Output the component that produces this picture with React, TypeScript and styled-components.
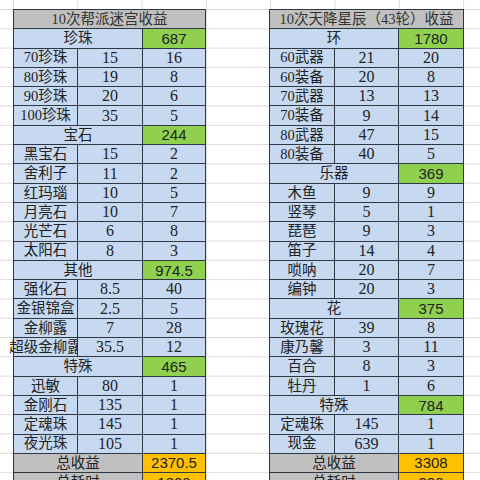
import React from 'react';
import styled, { createGlobalStyle } from 'styled-components';

type Tone = 'green' | 'orange';

type Row =
  | { kind: 'title'; text: string }
  | { kind: 'group'; label: string; value: string; tone: Tone }
  | { kind: 'item'; name: string; a: string; b: string };

const GlobalStyle = createGlobalStyle`
  html, body {
    margin: 0;
    padding: 0;
    width: 480px;
    height: 480px;
    overflow: hidden;
    background: #ffffff;
  }
`;

const Sheet = styled.div`
  width: 480px;
  height: 480px;
  box-sizing: border-box;
  padding: 9px 0 0 13px;
  display: flex;
  align-items: flex-start;
  gap: 63px;
  background-color: #ffffff;
  background-image:
    linear-gradient(to bottom, #dcdcdc 1px, transparent 1px),
    linear-gradient(to right, #dcdcdc 1px, transparent 1px);
  background-size: 100% 19.3px, 64.3px 100%;
  background-position: 0 9px, 13px 0;
  font-family: 'Liberation Serif', 'Noto Sans CJK SC', serif;
  font-size: 14.5px;
  color: #222;
`;

const Table = styled.div<{ $cols: string }>`
  display: grid;
  grid-template-columns: ${(p) => p.$cols};
  grid-auto-rows: 18.3px;
  gap: 1px;
  padding: 1px;
  background: #2e3742;
`;

const Cell = styled.div<{ $span?: number; $bg: string; $sans?: boolean; $num?: boolean }>`
  position: relative;
  grid-column: span ${(p) => p.$span ?? 1};
  background: ${(p) => p.$bg};
  display: flex;
  align-items: center;
  justify-content: center;
  white-space: nowrap;
  line-height: 1;
  font-size: ${(p) => (p.$num ? '16px' : p.$sans ? '15px' : '14.5px')};
  font-family: ${(p) =>
    p.$sans
      ? "'Liberation Sans', 'Noto Sans CJK SC', sans-serif"
      : "'Liberation Serif', 'Noto Sans CJK SC', serif"};
`;

const Title = styled(Cell)`
  color: #333;
`;

const BLUE = '#c6d9f1';
const GRAY = '#c0c0c0';
const TONES: Record<Tone, string> = { green: '#8fd14f', orange: '#ffc000' };

const left: Row[] = [
  { kind: 'title', text: '10次帮派迷宫收益' },
  { kind: 'group', label: '珍珠', value: '687', tone: 'green' },
  { kind: 'item', name: '70珍珠', a: '15', b: '16' },
  { kind: 'item', name: '80珍珠', a: '19', b: '8' },
  { kind: 'item', name: '90珍珠', a: '20', b: '6' },
  { kind: 'item', name: '100珍珠', a: '35', b: '5' },
  { kind: 'group', label: '宝石', value: '244', tone: 'green' },
  { kind: 'item', name: '黑宝石', a: '15', b: '2' },
  { kind: 'item', name: '舍利子', a: '11', b: '2' },
  { kind: 'item', name: '红玛瑙', a: '10', b: '5' },
  { kind: 'item', name: '月亮石', a: '10', b: '7' },
  { kind: 'item', name: '光芒石', a: '6', b: '8' },
  { kind: 'item', name: '太阳石', a: '8', b: '3' },
  { kind: 'group', label: '其他', value: '974.5', tone: 'green' },
  { kind: 'item', name: '强化石', a: '8.5', b: '40' },
  { kind: 'item', name: '金银锦盒', a: '2.5', b: '5' },
  { kind: 'item', name: '金柳露', a: '7', b: '28' },
  { kind: 'item', name: '超级金柳露', a: '35.5', b: '12' },
  { kind: 'group', label: '特殊', value: '465', tone: 'green' },
  { kind: 'item', name: '迅敏', a: '80', b: '1' },
  { kind: 'item', name: '金刚石', a: '135', b: '1' },
  { kind: 'item', name: '定魂珠', a: '145', b: '1' },
  { kind: 'item', name: '夜光珠', a: '105', b: '1' },
  { kind: 'group', label: '总收益', value: '2370.5', tone: 'orange' },
  { kind: 'group', label: '总耗时', value: '1800', tone: 'orange' },
];

const right: Row[] = [
  { kind: 'title', text: '10次天降星辰（43轮）收益' },
  { kind: 'group', label: '环', value: '1780', tone: 'green' },
  { kind: 'item', name: '60武器', a: '21', b: '20' },
  { kind: 'item', name: '60装备', a: '20', b: '8' },
  { kind: 'item', name: '70武器', a: '13', b: '13' },
  { kind: 'item', name: '70装备', a: '9', b: '14' },
  { kind: 'item', name: '80武器', a: '47', b: '15' },
  { kind: 'item', name: '80装备', a: '40', b: '5' },
  { kind: 'group', label: '乐器', value: '369', tone: 'green' },
  { kind: 'item', name: '木鱼', a: '9', b: '9' },
  { kind: 'item', name: '竖琴', a: '5', b: '1' },
  { kind: 'item', name: '琵琶', a: '9', b: '3' },
  { kind: 'item', name: '笛子', a: '14', b: '4' },
  { kind: 'item', name: '唢呐', a: '20', b: '7' },
  { kind: 'item', name: '编钟', a: '20', b: '3' },
  { kind: 'group', label: '花', value: '375', tone: 'green' },
  { kind: 'item', name: '玫瑰花', a: '39', b: '8' },
  { kind: 'item', name: '康乃馨', a: '3', b: '11' },
  { kind: 'item', name: '百合', a: '8', b: '3' },
  { kind: 'item', name: '牡丹', a: '1', b: '6' },
  { kind: 'group', label: '特殊', value: '784', tone: 'green' },
  { kind: 'item', name: '定魂珠', a: '145', b: '1' },
  { kind: 'item', name: '现金', a: '639', b: '1' },
  { kind: 'group', label: '总收益', value: '3308', tone: 'orange' },
  { kind: 'group', label: '总耗时', value: '330', tone: 'orange' },
];

const Income = ({ rows, cols }: { rows: Row[]; cols: string }) => (
  <Table $cols={cols}>
    {rows.map((r, i) => {
      if (r.kind === 'title')
        return (
          <Title key={i} $span={3} $bg={GRAY}>
            {r.text}
          </Title>
        );
      if (r.kind === 'group')
        return (
          <React.Fragment key={i}>
            <Cell $span={2} $bg={r.tone === 'orange' ? GRAY : BLUE}>
              {r.label}
            </Cell>
            <Cell $bg={TONES[r.tone]} $sans>
              {r.value}
            </Cell>
          </React.Fragment>
        );
      return (
        <React.Fragment key={i}>
          <Cell $bg={BLUE}>{r.name}</Cell>
          <Cell $bg={BLUE} $num>
            {r.a}
          </Cell>
          <Cell $bg={BLUE} $num>
            {r.b}
          </Cell>
        </React.Fragment>
      );
    })}
  </Table>
);

export default function App() {
  return (
    <>
      <GlobalStyle />
      <Sheet>
        <Income rows={left} cols="63px 64px 62px" />
        <Income rows={right} cols="64px 63px 64px" />
      </Sheet>
    </>
  );
}
